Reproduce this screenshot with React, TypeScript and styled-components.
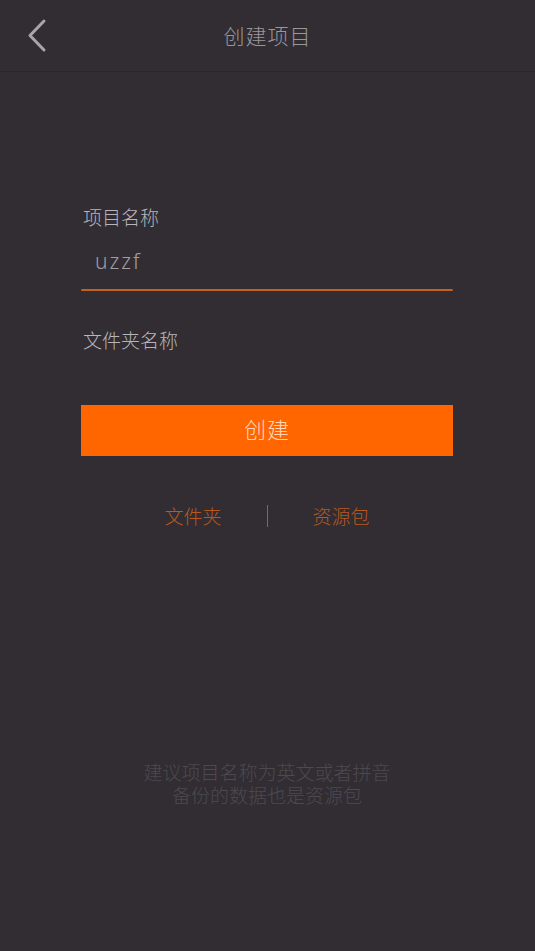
import React, { useState } from "react";
import styled, { createGlobalStyle } from "styled-components";

const GlobalStyle = createGlobalStyle`
    html, body {
        margin: 0;
        padding: 0;
        background: #312d33;
    }
    body {
        font-family: "Noto Sans CJK SC", "Noto Sans", sans-serif;
    }
`;

const Pagina = styled.div`
    width: 535px;
    min-height: 951px;
    background: #312d33;
    box-sizing: border-box;
`;

const Cabecera = styled.header`
    height: 72px;
    display: flex;
    align-items: center;
    justify-content: center;
    position: relative;
    border-bottom: 1px solid #29262b;
    box-sizing: border-box;
`;

const BotonAtras = styled.button`
    position: absolute;
    left: 20px;
    top: 14px;
    width: 36px;
    height: 44px;
    padding: 0;
    border: none;
    background: transparent;
    display: flex;
    align-items: center;
    justify-content: center;
    cursor: pointer;
`;

const Titulo = styled.h1`
    margin: 0;
    margin-top: -2px;
    font-size: 21px;
    font-weight: 300;
    color: #9a979c;
    letter-spacing: 1px;
`;

const Formulario = styled.div`
    padding: 133px 82px 0 81px;
    box-sizing: border-box;
`;

const Etiqueta = styled.label<{ $arriba?: number }>`
    display: block;
    margin-top: ${(p) => p.$arriba ?? 0}px;
    padding-left: 2px;
    font-size: 19px;
    line-height: 24px;
    font-weight: 300;
    color: #b8b5ba;
`;

const CampoTexto = styled.input`
    display: block;
    width: 100%;
    height: 60px;
    padding: 4px 0 0 14px;
    border: none;
    background: transparent;
    font-family: "Noto Sans", sans-serif;
    font-size: 21px;
    font-weight: 300;
    letter-spacing: 2px;
    color: #a19ea3;
    outline: none;
    box-sizing: border-box;
`;

const CampoVacio = styled(CampoTexto)`
    height: 0;
    padding: 0;
`;

const Subrayado = styled.div`
    height: 2px;
    background: #c4611f;
    border-radius: 1px;
`;

const BotonCrear = styled.button`
    display: block;
    width: 100%;
    height: 51px;
    margin-top: 53px;
    padding: 0 0 6px;
    border: none;
    background: #ff6600;
    color: #ffd6bd;
    font-family: "Noto Sans CJK SC", sans-serif;
    font-size: 22px;
    font-weight: 300;
    letter-spacing: 1px;
    cursor: pointer;
`;

const FilaEnlaces = styled.div`
    display: flex;
    align-items: center;
    justify-content: center;
    margin-top: 48px;
    height: 24px;
`;

const Enlace = styled.a`
    width: 147px;
    text-align: center;
    font-size: 19px;
    line-height: 24px;
    font-weight: 300;
    color: #b8591c;
    text-decoration: none;
    cursor: pointer;
`;

const Separador = styled.span`
    width: 1px;
    height: 22px;
    background: #b8591c;
`;

const Nota = styled.p`
    margin: 234px 0 0;
    text-align: center;
    font-family: "Liberation Sans", "Noto Sans CJK SC", sans-serif;
    font-size: 19px;
    line-height: 23px;
    font-weight: 300;
    color: #4d4950;
`;

const Chevron = () => (
    <svg width="24" height="36" viewBox="0 0 24 36">
        <path d="M18 3 L4 17.5 L18 32" fill="none" stroke="#a9a6ab" strokeWidth="3" strokeLinecap="round" strokeLinejoin="round" />
    </svg>
);

const App = () => {
    const [nombreProyecto, setNombreProyecto] = useState<string>("uzzf");
    const [nombreCarpeta, setNombreCarpeta] = useState<string>("");

    return (
        <>
            <GlobalStyle />
            <Pagina>
                <Cabecera>
                    <BotonAtras aria-label="返回">
                        <Chevron />
                    </BotonAtras>
                    <Titulo>创建项目</Titulo>
                </Cabecera>

                <Formulario>
                    <Etiqueta>项目名称</Etiqueta>
                    <CampoTexto value={nombreProyecto} onChange={(e) => setNombreProyecto(e.target.value)} />
                    <Subrayado />

                    <Etiqueta $arriba={37}>文件夹名称</Etiqueta>
                    <CampoVacio value={nombreCarpeta} onChange={(e) => setNombreCarpeta(e.target.value)} />

                    <BotonCrear>创建</BotonCrear>

                    <FilaEnlaces>
                        <Enlace>文件夹</Enlace>
                        <Separador />
                        <Enlace>资源包</Enlace>
                    </FilaEnlaces>

                    <Nota>
                        建议项目名称为英文或者拼音
                        <br />
                        备份的数据也是资源包
                    </Nota>
                </Formulario>
            </Pagina>
        </>
    );
};

export default App;
